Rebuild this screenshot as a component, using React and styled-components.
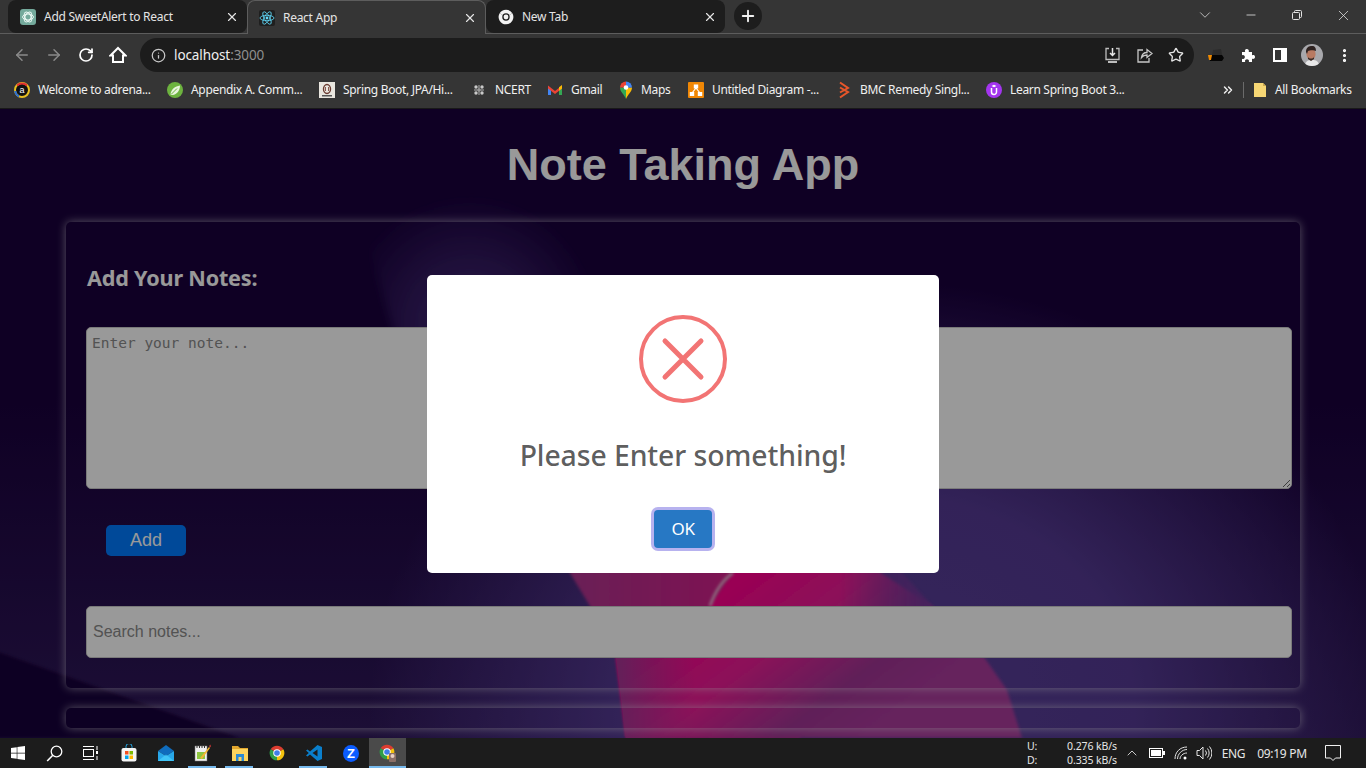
import styled, { createGlobalStyle } from 'styled-components'
import {
  ArrowLeft, ArrowRight, RotateCw, Info, Star, MoreVertical, ChevronDown, ChevronUp,
  Minus, X, Plus, ChevronsRight,
} from 'lucide-react'
import { FaWindows } from 'react-icons/fa'

const UI = `"Noto Sans", "Open Sans", sans-serif`

const GlobalStyle = createGlobalStyle`
  html, body { margin: 0; padding: 0; height: 100%; overflow: hidden; background: #1c1c1c; }
  #root { height: 100%; }
  * { box-sizing: border-box; }
`

const Screen = styled.div`
  width: 1366px;
  height: 768px;
  display: flex;
  flex-direction: column;
  overflow: hidden;
`

/* browser chrome */
const TabStrip = styled.div`
  height: 34px;
  flex: none;
  display: flex;
  background: #353535;
  border-bottom: 1px solid #5d5d5d;
  padding-left: 8px;
`
const Tab = styled.div`
  width: 239px;
  height: ${(p) => (p.$active ? '34px' : '33px')};
  display: flex;
  align-items: center;
  gap: 8px;
  padding: 0 8px 0 ${(p) => (p.$active ? 11 : 12)}px;
  background: ${(p) => (p.$active ? '#353535' : '#1d1d1d')};
  border-radius: 8px 8px ${(p) => (p.$active ? '0 0' : '8px 8px')};
  border: ${(p) => (p.$active ? '1px solid #5d5d5d' : 'none')};
  border-bottom: none;
  color: #e4e4e4;
  font: 12px ${UI};
  position: relative;
`
const TabTitle = styled.span`
  flex: 1;
  white-space: nowrap;
  letter-spacing: -0.28px;
`
const NewTab = styled.div`
  width: 28px;
  height: 28px;
  margin: 2px 0 0 9px;
  border-radius: 50%;
  background: #1d1d1d;
  color: #f1f1f1;
  display: flex;
  align-items: center;
  justify-content: center;
`
const WindowControls = styled.div`
  margin-left: auto;
  display: flex;
  align-items: center;
  height: 30px;
  color: #e2e2e2;
`
const WinButton = styled.div`
  width: ${(p) => p.$w || 46}px;
  display: flex;
  justify-content: center;
`
const RestoreIcon = () => (
  <svg width="12" height="12" viewBox="0 0 12 12" fill="none" stroke="#e2e2e2" strokeWidth="1">
    <rect x="1.5" y="3.5" width="7" height="7" rx="1" />
    <path d="M3.5 3.5V2.5a1 1 0 0 1 1-1h5a1 1 0 0 1 1 1v5a1 1 0 0 1-1 1h-1" />
  </svg>
)

const Toolbar = styled.div`
  height: 39px;
  flex: none;
  display: flex;
  align-items: center;
  background: #353535;
  padding: 4px 0 1px 6px;
`
const NavButton = styled.div`
  width: 32px;
  display: flex;
  justify-content: center;
  color: ${(p) => (p.$off ? '#8a8a8a' : '#ffffff')};
`
const Omnibox = styled.div`
  width: 1054px;
  height: 34px;
  margin-left: 6px;
  border-radius: 17px;
  background: #1c1c1c;
  display: flex;
  align-items: center;
  padding: 0 2px 0 11px;
  color: #c8c8c8;
`
const Url = styled.div`
  margin-left: 8px;
  font: 13.5px ${UI};
  letter-spacing: -0.1px;
  color: #f0f0f0;
  flex: 1;
  span { color: #8f8f8f; }
`
const BoxIcon = styled.div`
  width: 32px;
  display: flex;
  justify-content: center;
`
const ToolIcons = styled.div`
  display: flex;
  align-items: center;
  margin-left: 6px;
`
const ToolIcon = styled.div`
  width: 32px;
  display: flex;
  justify-content: center;
  color: #fff;
`

const BookmarkBar = styled.div`
  height: 36px;
  flex: none;
  display: flex;
  align-items: center;
  background: #353535;
  border-bottom: 1px solid #191919;
  padding: 0 14px 2px;
  gap: 16px;
  color: #f0f0f0;
  font: 12px ${UI};
`
const Bookmark = styled.div`
  display: flex;
  align-items: center;
  gap: 8px;
  white-space: nowrap;
`
const BookmarkLabel = styled.span`
  display: block;
  width: ${(p) => p.$w}px;
  letter-spacing: -0.32px;
`
const BookmarkEnd = styled.div`
  margin-left: auto;
  display: flex;
  align-items: center;
  margin-right: 1px;
`
const Separator = styled.div`
  width: 1px;
  height: 16px;
  background: #6b6b6b;
  margin: 0 9px 0 8px;
`

/* page */
const Page = styled.main`
  position: relative;
  flex: 1;
  min-height: 0;
  overflow: hidden;
  background: #19003c;
  font-family: "Liberation Sans", Arial, sans-serif;
`
const Wallpaper = styled.svg`
  position: absolute;
  inset: 0;
  width: 100%;
  height: 100%;
`
const Content = styled.div`
  position: relative;
  padding: 28px 66px 0;
`
const Title = styled.h1`
  margin: 0 0 30px;
  height: 55px;
  line-height: 55px;
  text-align: center;
  font-size: 45px;
  font-weight: 700;
  color: #fff;
`
const Card = styled.section`
  padding: ${(p) => p.$pad || '20px'};
  border-radius: 5px;
  box-shadow: 0 0 10px rgba(255, 255, 255, 0.55);
  margin-bottom: 20px;
`
const CardHeading = styled.h2`
  margin: 21px 0 34px 1px;
  height: 30px;
  font: 700 21.6px/30px ${UI};
  letter-spacing: -0.2px;
  color: #fff;
`
const NoteArea = styled.textarea`
  display: block;
  box-sizing: content-box;
  width: 100%;
  height: 148px;
  padding: 7px 5px 5px;
  border: 1px solid #ccc;
  border-radius: 5px;
  background: #fff;
  font: 14.5px "DejaVu Sans Mono", monospace;
  outline: none;
  &::placeholder { color: #8a8a8a; }
`
const AddButton = styled.button`
  display: block;
  width: 80px;
  height: 31px;
  margin: 36px 0 50px 20px;
  padding: 0;
  border: none;
  border-radius: 5px;
  background: #007bff;
  color: #fff;
  font: 18px "Liberation Sans", Arial, sans-serif;
`
const SearchInput = styled.input`
  display: block;
  box-sizing: content-box;
  width: 100%;
  height: 40px;
  padding: 5px 4px 5px 6px;
  border: 1px solid #ccc;
  border-radius: 5px;
  background: #fff;
  font: 16px "Liberation Sans", Arial, sans-serif;
  outline: none;
  &::placeholder { color: #8a8a8a; }
`

/* sweetalert */
const Backdrop = styled.div`
  position: absolute;
  inset: 0;
  background: rgba(0, 0, 0, 0.4);
  display: flex;
  align-items: center;
  justify-content: center;
`
const Modal = styled.div`
  width: 512px;
  height: 298px;
  background: #fff;
  border-radius: 5px;
  padding-top: 40px;
  display: flex;
  flex-direction: column;
  align-items: center;
`
const ModalTitle = styled.div`
  margin-top: 29px;
  height: 46px;
  font: 500 28.4px/46px ${UI};
  letter-spacing: -0.1px;
  color: rgba(0, 0, 0, 0.65);
`
const OkButton = styled.button`
  margin-top: 32px;
  width: 58px;
  height: 38px;
  padding: 0;
  border: none;
  border-radius: 4px;
  background: #2778c4;
  color: #fff;
  font: 17px ${UI};
  letter-spacing: -0.4px;
  box-shadow: 0 0 0 3px rgba(112, 102, 224, 0.5);
`

/* taskbar */
const Taskbar = styled.footer`
  height: 30px;
  flex: none;
  display: flex;
  align-items: stretch;
  background: #1c1c1c;
  color: #e6e6e6;
  font: 12px ${UI};
`
const TaskSlot = styled.div`
  width: ${(p) => p.$w || 37}px;
  flex: none;
  display: flex;
  align-items: center;
  justify-content: center;
  background: ${(p) => (p.$active ? '#4a4a4a' : 'transparent')};
  position: relative;
  &::after {
    content: '';
    display: ${(p) => (p.$running || p.$active ? 'block' : 'none')};
    position: absolute;
    left: ${(p) => (p.$active ? 0 : 4)}px;
    right: ${(p) => (p.$active ? 0 : 5)}px;
    bottom: 0;
    height: 2px;
    background: #76b9ed;
  }
`
const TaskGap = styled.div`
  width: 2px;
`
const Tray = styled.div`
  margin-left: auto;
  display: flex;
  align-items: center;
  height: 100%;
`
const NetSpeed = styled.div`
  width: 90px;
  margin: 1px 5px 0 0;
  display: grid;
  grid-template-columns: auto 1fr;
  font-size: 10.5px;
  line-height: 13.5px;
  letter-spacing: -0.1px;
  span:nth-child(even) { text-align: right; }
`
const TrayIcon = styled.div`
  width: ${(p) => p.$w || 24}px;
  display: flex;
  justify-content: center;
`
const TrayText = styled.div`
  width: ${(p) => p.$w}px;
  text-align: center;
  letter-spacing: -0.3px;
  white-space: nowrap;
`
const ShowDesktop = styled.div`
  width: 1px;
  margin-left: 10px;
  margin-right: 4px;
  background: #777;
`

/* drawn icons */
const ChromeLogo = ({ size = 16, mono }) => (
  <svg width={size} height={size} viewBox="0 0 24 24">
    <path d="M12 12L2.47 6.5A11 11 0 0 1 21.53 6.5Z" fill={mono ? '#f2f2f2' : '#dc3c30'} />
    <path d="M12 12L21.53 6.5A11 11 0 0 1 12 23Z" fill={mono ? '#f2f2f2' : '#f4c20d'} />
    <path d="M12 12L12 23A11 11 0 0 1 2.47 6.5Z" fill={mono ? '#f2f2f2' : '#2f9e48'} />
    <circle cx="12" cy="12" r="5.6" fill={mono ? '#1d1d1d' : '#fff'} />
    <circle cx="12" cy="12" r={mono ? 3.6 : 4.2} fill={mono ? '#f2f2f2' : '#3f7ee8'} />
  </svg>
)
const GptIcon = () => (
  <svg width="16" height="16" viewBox="0 0 16 16">
    <rect width="16" height="16" rx="3" fill="#74aa9c" />
    <g fill="none" stroke="#eefaf6" strokeWidth="1">
      <ellipse cx="8" cy="8" rx="5.4" ry="3" />
      <ellipse cx="8" cy="8" rx="5.4" ry="3" transform="rotate(60 8 8)" />
      <ellipse cx="8" cy="8" rx="5.4" ry="3" transform="rotate(120 8 8)" />
    </g>
  </svg>
)
const ReactIcon = () => (
  <svg width="16" height="16" viewBox="0 0 16 16">
    <rect width="16" height="16" rx="2" fill="#1f1f1f" />
    <g fill="none" stroke="#61dafb" strokeWidth="0.8">
      <ellipse cx="8" cy="8" rx="7" ry="2.7" />
      <ellipse cx="8" cy="8" rx="7" ry="2.7" transform="rotate(60 8 8)" />
      <ellipse cx="8" cy="8" rx="7" ry="2.7" transform="rotate(120 8 8)" />
    </g>
    <circle cx="8" cy="8" r="1.4" fill="#61dafb" />
  </svg>
)
const HomeIcon = () => (
  <svg width="18" height="18" viewBox="0 0 18 18" fill="none" stroke="#fff" strokeWidth="2" strokeLinejoin="miter">
    <path d="M1.5 9.5L9 2l7.5 7.5H14V16H4V9.5Z" />
  </svg>
)
const SaveIcon = () => (
  <svg width="17" height="17" viewBox="0 0 17 17" fill="none" stroke="#bdbdbd" strokeWidth="1.3">
    <path d="M5 1.5H2v11h13v-11h-3" />
    <path d="M8.5 1v7M6 6l2.5 2.5L11 6" stroke="#e8e8e8" strokeWidth="1.5" />
    <path d="M4 15h9" strokeWidth="2" />
  </svg>
)
const ShareIcon = () => (
  <svg width="17" height="17" viewBox="0 0 17 17" fill="none" stroke="#c8c8c8" strokeWidth="1.3">
    <path d="M7 3H2v12h11v-4" />
    <path d="M5.5 10.5C6 7 8.5 5.5 11 5.5V2.5L16 6.5l-5 4V8C9 8 7 8.6 5.5 10.5Z" />
  </svg>
)
const ExtensionLogo = () => (
  <svg width="18" height="16" viewBox="0 0 18 16">
    <path d="M3 8h12l2 3-2 3H3Z" fill="#050505" />
    <path d="M1 8h4l-1 5H2Z" fill="#f08a00" />
    <path d="M6 3l8-1 1 6H5Z" fill="#2b2b2b" />
  </svg>
)
const PuzzleIcon = () => (
  <svg width="16" height="16" viewBox="0 0 16 16" fill="#fff">
    <path d="M2 5h3.2a2 2 0 1 1 3.6-.4V5H12v3.2a2 2 0 1 1 .4 3.6H12V15H8.8a2 2 0 1 0-3.6 0H2v-3.2a2 2 0 1 0 0-3.6Z" />
  </svg>
)
const SidePanelIcon = () => (
  <svg width="14" height="14" viewBox="0 0 14 14">
    <path fillRule="evenodd" fill="#fff" d="M0 0h14v14H0ZM2 2v10h6V2Z" />
  </svg>
)
const Avatar = () => (
  <svg width="22" height="22" viewBox="0 0 22 22">
    <defs><clipPath id="avatar"><circle cx="11" cy="11" r="11" /></clipPath></defs>
    <g clipPath="url(#avatar)">
      <rect width="22" height="22" fill="#a8a8ac" />
      <path d="M4 22c0-5 3-6 7-6s7 1 7 6Z" fill="#e8e8e8" />
      <ellipse cx="10" cy="10" rx="4.6" ry="6" fill="#b87a62" />
      <path d="M5 8c0-5 3-6 6-6s4 2 4 5c-2-1-6-1-8 0l-1 3Z" fill="#2e2220" />
      <path d="M7 13c1 2 5 2 6 0v2l-3 2-3-2Z" fill="#3a2a25" />
    </g>
  </svg>
)
const AdrenalinIcon = () => (
  <svg width="16" height="16" viewBox="0 0 16 16">
    <circle cx="8" cy="8" r="7" fill="#111" stroke="#e8c020" strokeWidth="2" />
    <path d="M3 3.5A7 7 0 0 1 13 3.5" fill="none" stroke="#e03030" strokeWidth="2" />
    <path d="M1.2 9A7 7 0 0 0 5 14.4" fill="none" stroke="#2a6fd8" strokeWidth="2" />
    <text x="8" y="11" textAnchor="middle" fontSize="9" fill="#fff" fontFamily="Liberation Sans">a</text>
  </svg>
)
const SpringIcon = () => (
  <svg width="16" height="16" viewBox="0 0 16 16">
    <circle cx="8" cy="8" r="8" fill="#6db33f" />
    <path d="M3.5 12.5C4 7 8 4.5 13 3.5c0 5-3 9-7.500 9.500Z" fill="#e8f5dc" />
    <path d="M4.500 12L10 6.500" stroke="#6db33f" />
  </svg>
)
const BookCoverIcon = () => (
  <svg width="16" height="16" viewBox="0 0 16 16">
    <rect width="16" height="16" fill="#e9e6df" />
    <ellipse cx="8" cy="7" rx="3.500" ry="4.500" fill="none" stroke="#6a3b30" strokeWidth="1.400" />
    <path d="M6.500 5v4M9.500 5v4" stroke="#8a5a50" />
    <rect x="3" y="13" width="10" height="1.500" fill="#555" />
  </svg>
)
const NcertIcon = () => (
  <svg width="16" height="16" viewBox="0 0 16 16" fill="#c9c9c9">
    <circle cx="5" cy="5" r="1.700" /><circle cx="11" cy="5" r="1.700" />
    <circle cx="5" cy="11" r="1.700" /><circle cx="11" cy="11" r="1.700" />
    <circle cx="8" cy="8" r="1.700" fill="#8f8f8f" />
    <rect x="3" y="7.400" width="10" height="1.200" fill="#9a9a9a" />
    <rect x="7.400" y="3" width="1.200" height="10" fill="#9a9a9a" />
  </svg>
)
const GmailIcon = () => (
  <svg width="16" height="16" viewBox="0 0 16 16">
    <path d="M1 4v9h3V6.500Z" fill="#4285f4" />
    <path d="M15 4v9h-3V6.500Z" fill="#34a853" />
    <path d="M1 3.500L8 9l7-5.500v3L8 12 1 6.500Z" fill="#ea4335" />
    <path d="M12 5.200L15 3v3.500l-3 2.300Z" fill="#fbbc04" />
  </svg>
)
const MapsIcon = () => (
  <svg width="14" height="18" viewBox="0 0 14 18">
    <path d="M7 18C5 13 1 11 1 6.500L7 6.500Z" fill="#34a853" />
    <path d="M7 18c2-5 6-7 6-11.500L7 6.500Z" fill="#fbbc04" />
    <path d="M1 6.500A6 6 0 0 1 7 .5v6Z" fill="#ea4335" />
    <path d="M7 .5a6 6 0 0 1 6 6H7Z" fill="#4285f4" />
    <circle cx="7" cy="6.500" r="2.300" fill="#fff" />
  </svg>
)
const DrawioIcon = () => (
  <svg width="16" height="16" viewBox="0 0 16 16">
    <rect width="16" height="16" rx="1" fill="#f08705" />
    <path d="M8 6L4 11M8 6l4 5" stroke="#fff" strokeWidth="1.200" />
    <rect x="5.800" y="2.500" width="4.400" height="4" fill="#fff" />
    <rect x="1.800" y="10" width="4.400" height="4" fill="#fff" />
    <rect x="9.800" y="10" width="4.400" height="4" fill="#fff" />
  </svg>
)
const BmcIcon = () => (
  <svg width="16" height="18" viewBox="0 0 16 18" fill="none" stroke="#e8562a" strokeWidth="2">
    <path d="M4 1.500L12 7 4 11.500M4 6.500L12 11 4 16.500" />
  </svg>
)
const CourseIcon = () => (
  <svg width="16" height="16" viewBox="0 0 16 16">
    <circle cx="8" cy="8" r="8" fill="#a435f0" />
    <path d="M5.500 6v4a2.500 2.500 0 0 0 5 0V6" fill="none" stroke="#fff" strokeWidth="1.500" />
    <path d="M5.500 4L8 2.800 10.500 4 8 5.200Z" fill="#fff" />
  </svg>
)
const FolderBookmark = () => (
  <svg width="14" height="16" viewBox="0 0 14 16">
    <path d="M1 1h9l3 3v11H1Z" fill="#f6d674" />
    <path d="M10 1l3 3h-3Z" fill="#c9a850" />
  </svg>
)
const SearchGlass = () => (
  <svg width="17" height="17" viewBox="0 0 17 17" fill="none" stroke="#fff" strokeWidth="1.300">
    <circle cx="10.500" cy="6.500" r="5.300" />
    <path d="M6.800 10.300L1.200 16" strokeWidth="1.600" />
  </svg>
)
const StoreIcon = () => (
  <svg width="16" height="18" viewBox="0 0 16 18">
    <path d="M5 4V2.500a3 3 0 0 1 6 0V4" fill="none" stroke="#25a9e8" />
    <rect x="0.500" y="4" width="15" height="13.500" rx="2" fill="#f4f4f4" />
    <rect x="4" y="7" width="3.500" height="3.500" fill="#f25022" />
    <rect x="8.500" y="7" width="3.500" height="3.500" fill="#7fba00" />
    <rect x="4" y="11.500" width="3.500" height="3.500" fill="#00a4ef" />
    <rect x="8.500" y="11.500" width="3.500" height="3.500" fill="#ffb900" />
  </svg>
)
const MailIcon = () => (
  <svg width="16" height="16" viewBox="0 0 16 16">
    <path d="M0 6L8 0l8 6-8 5Z" fill="#0f6cbd" />
    <path d="M0 6v10h16V6L8 11Z" fill="#28a8ea" />
    <path d="M0 16L8 9.500 16 16Z" fill="#50d9ff" opacity="0.6" />
  </svg>
)
const NotepadIcon = () => (
  <svg width="17" height="18" viewBox="0 0 17 18">
    <rect x="1" y="2" width="12" height="15" fill="#f0f0f0" stroke="#777" strokeWidth="0.500" />
    <path d="M3 1v3M5.500 1v3M8 1v3M10.500 1v3" stroke="#333" />
    <rect x="3" y="8" width="8" height="7" fill="#8dc63f" />
    <path d="M6 14L15 3l1 1-8 11Z" fill="#f2b632" />
    <path d="M15 2l1.500-1.500 .5 2-1 1Z" fill="#b33" />
  </svg>
)
const ExplorerIcon = () => (
  <svg width="16" height="16" viewBox="0 0 16 16">
    <path d="M0 1h6l2 2h8v3H0Z" fill="#e2a72e" />
    <rect y="4" width="16" height="12" fill="#fcd45e" />
    <rect x="4" y="9" width="8" height="7" fill="#2a8ad4" />
    <rect x="6.500" y="12" width="3" height="4" fill="#fcd45e" />
  </svg>
)
const VsCodeIcon = () => (
  <svg width="16" height="16" viewBox="0 0 16 16">
    <path d="M11.500 0L16 2v12l-4.500 2L4 9.500 1.500 11.500 0 10.500 2.800 8 0 5.500l1.500-1L4 6.500Z" fill="#0a7fcc" />
    <path d="M11.500 4.500L6.500 8l5 3.500Z" fill="#1c1c1c" />
  </svg>
)
const ZoomChatIcon = () => (
  <svg width="16" height="17" viewBox="0 0 16 17">
    <ellipse cx="8" cy="8.500" rx="8" ry="8.500" fill="#0b5cff" />
    <text x="8" y="13" textAnchor="middle" fontSize="13" fontWeight="700" fill="#fff" fontFamily="Liberation Sans">Z</text>
  </svg>
)
const ChromeWithFace = () => (
  <svg width="18" height="18" viewBox="0 0 18 18">
    <foreignObject width="16" height="16"><ChromeLogo /></foreignObject>
    <rect x="10" y="9" width="7" height="9" rx="1" fill="#8a6f68" />
    <circle cx="13.500" cy="12" r="2" fill="#e8d0c4" />
  </svg>
)
const TaskViewIcon = () => (
  <svg width="16" height="16" viewBox="0 0 16 16" fill="none" stroke="#fff" strokeWidth="1">
    <rect x="1.500" y="4.500" width="10" height="7" />
    <path d="M1 1.500h11M1 14.500h11M15 1v4M15 11v4" />
    <rect x="14" y="6" width="2" height="3" fill="#fff" stroke="none" />
  </svg>
)
const BatteryIcon = () => (
  <svg width="16" height="10" viewBox="0 0 16 10">
    <rect x="0.500" y="0.500" width="13" height="9" fill="none" stroke="#fff" />
    <rect x="2" y="2" width="10" height="6" fill="#fff" />
    <rect x="14" y="3" width="2" height="4" fill="#fff" />
  </svg>
)
const WifiIcon = () => (
  <svg width="14" height="14" viewBox="0 0 14 14" fill="none" stroke="#e0e0e0">
    <path d="M1 13C1 6 6 1 13 1M3.500 13C3.500 8 8 3.500 13 3.500M6 13c0-3 3-6 7-6" />
    <circle cx="11" cy="12" r="1.500" fill="#fff" stroke="none" />
  </svg>
)
const VolumeIcon = () => (
  <svg width="16" height="16" viewBox="0 0 16 16" fill="none" stroke="#e6e6e6">
    <path d="M1 5.500h2.500L7 2v12l-3.500-3.500H1Z" />
    <path d="M9.500 5.500a4 4 0 0 1 0 5M11.500 3.500a7 7 0 0 1 0 9M13.500 1.500a10 10 0 0 1 0 13" />
  </svg>
)
const NotifyIcon = () => (
  <svg width="16" height="17" viewBox="0 0 16 17" fill="none" stroke="#f0f0f0">
    <path d="M.5 .5h15v12.500h-5L8 15.500 5.500 13h-5Z" />
  </svg>
)
const ErrorIcon = () => (
  <svg width="88" height="88" viewBox="0 0 88 88" fill="none" stroke="#f27474">
    <circle cx="44" cy="44" r="42" strokeWidth="4" />
    <path d="M26 26l36 36M62 26L26 62" strokeWidth="5" strokeLinecap="round" />
  </svg>
)

const bookmarks = [
  { icon: <AdrenalinIcon />, label: 'Welcome to adrena...', w: 113 },
  { icon: <SpringIcon />, label: 'Appendix A. Comm...', w: 112 },
  { icon: <BookCoverIcon />, label: 'Spring Boot, JPA/Hi...', w: 112 },
  { icon: <NcertIcon />, label: 'NCERT', w: 36 },
  { icon: <GmailIcon />, label: 'Gmail', w: 32 },
  { icon: <MapsIcon />, label: 'Maps', w: 31 },
  { icon: <DrawioIcon />, label: 'Untitled Diagram -...', w: 108 },
  { icon: <BmcIcon />, label: 'BMC Remedy Singl...', w: 110 },
  { icon: <CourseIcon />, label: 'Learn Spring Boot 3...', w: 114 },
]

const taskApps = [
  { icon: <StoreIcon /> },
  { icon: <MailIcon /> },
  { icon: <NotepadIcon />, running: true },
  { icon: <ExplorerIcon />, running: true },
  { icon: <ChromeLogo /> },
  { icon: <VsCodeIcon />, running: true },
  { icon: <ZoomChatIcon /> },
  { icon: <ChromeWithFace />, active: true },
]

const App = () => {
  return (
    <Screen>
      <GlobalStyle />
      <TabStrip>
        <Tab>
          <GptIcon />
          <TabTitle>Add SweetAlert to React</TabTitle>
          <X size={14} />
        </Tab>
        <Tab $active>
          <ReactIcon />
          <TabTitle>React App</TabTitle>
          <X size={14} />
        </Tab>
        <Tab>
          <ChromeLogo mono />
          <TabTitle>New Tab</TabTitle>
          <X size={14} />
        </Tab>
        <NewTab><Plus size={18} strokeWidth={2.5} /></NewTab>
        <WindowControls>
          <WinButton><ChevronDown size={18} strokeWidth={1} /></WinButton>
          <WinButton><Minus size={14} strokeWidth={1.4} /></WinButton>
          <WinButton><RestoreIcon /></WinButton>
          <WinButton><X size={17} strokeWidth={1.1} /></WinButton>
        </WindowControls>
      </TabStrip>

      <Toolbar>
        <NavButton $off><ArrowLeft size={18} /></NavButton>
        <NavButton $off><ArrowRight size={18} /></NavButton>
        <NavButton><RotateCw size={16} strokeWidth={2.6} /></NavButton>
        <NavButton><HomeIcon /></NavButton>
        <Omnibox>
          <Info size={15} />
          <Url>localhost<span>:3000</span></Url>
          <BoxIcon><SaveIcon /></BoxIcon>
          <BoxIcon><ShareIcon /></BoxIcon>
          <BoxIcon><Star size={16} strokeWidth={2} color="#e4e4e4" /></BoxIcon>
        </Omnibox>
        <ToolIcons>
          <ToolIcon><ExtensionLogo /></ToolIcon>
          <ToolIcon><PuzzleIcon /></ToolIcon>
          <ToolIcon><SidePanelIcon /></ToolIcon>
          <ToolIcon><Avatar /></ToolIcon>
          <ToolIcon><MoreVertical size={17} strokeWidth={2.5} /></ToolIcon>
        </ToolIcons>
      </Toolbar>

      <BookmarkBar>
        {bookmarks.map((b) => (
          <Bookmark key={b.label}>
            {b.icon}
            <BookmarkLabel $w={b.w}>{b.label}</BookmarkLabel>
          </Bookmark>
        ))}
        <BookmarkEnd>
          <ChevronsRight size={14} strokeWidth={2.5} />
          <Separator />
          <Bookmark>
            <FolderBookmark />
            <BookmarkLabel $w={76}>All Bookmarks</BookmarkLabel>
          </Bookmark>
        </BookmarkEnd>
      </BookmarkBar>

      <Page>
        <Wallpaper viewBox="0 0 1366 629" preserveAspectRatio="none">
          <defs>
            <radialGradient id="glowRight" gradientUnits="userSpaceOnUse" cx="0" cy="0" r="1" gradientTransform="translate(880 600) scale(510 430)">
              <stop offset="0" stopColor="#5a3f9a" />
              <stop offset="0.5" stopColor="#553a93" />
              <stop offset="1" stopColor="#553a93" stopOpacity="0" />
            </radialGradient>
            <radialGradient id="glowTop" gradientUnits="userSpaceOnUse" cx="470" cy="215" r="130">
              <stop offset="0" stopColor="#4a3080" />
              <stop offset="1" stopColor="#4a3080" stopOpacity="0" />
            </radialGradient>
            <linearGradient id="glowBottom" x1="0" y1="0" x2="0" y2="1">
              <stop offset="0.45" stopColor="#3a2468" stopOpacity="0" />
              <stop offset="1" stopColor="#3a2468" stopOpacity="0.7" />
            </linearGradient>
            <linearGradient id="pinkBlob" gradientUnits="userSpaceOnUse" x1="730" y1="480" x2="850" y2="640">
              <stop offset="0" stopColor="#ff008c" />
              <stop offset="0.36" stopColor="#e91e95" />
              <stop offset="0.73" stopColor="#a03593" />
              <stop offset="1" stopColor="#aa3a9c" />
            </linearGradient>
            <linearGradient id="pinkLeft" gradientUnits="userSpaceOnUse" x1="570" y1="470" x2="720" y2="470">
              <stop offset="0" stopColor="#b0358f" />
              <stop offset="1" stopColor="#d0208a" />
            </linearGradient>
            <linearGradient id="pinkFade" gradientUnits="userSpaceOnUse" x1="620" y1="0" x2="695" y2="0">
              <stop offset="0" stopColor="#a93595" />
              <stop offset="1" stopColor="#a93595" stopOpacity="0" />
            </linearGradient>
            <linearGradient id="pinkEdge" gradientUnits="userSpaceOnUse" x1="840" y1="0" x2="930" y2="0">
              <stop offset="0" stopColor="#75389a" stopOpacity="0" />
              <stop offset="1" stopColor="#75389a" />
            </linearGradient>
            <filter id="soft"><feGaussianBlur stdDeviation="1.5" /></filter>
            <filter id="softer"><feGaussianBlur stdDeviation="5" /></filter>
          </defs>
          <rect width="1366" height="629" fill="url(#glowBottom)" />
          <path d="M-10 540L240 629H-10Z" fill="#17003a" filter="url(#soft)" />
          <path d="M340 40L392 218 420 300 660 300 660 40Z" fill="url(#glowTop)" filter="url(#softer)" />
          <rect x="300" y="0" width="1100" height="629" fill="url(#glowRight)" />
          <path
            d="M570 464L590 497 616 548 626 629H800V400H540Z"
            fill="url(#pinkLeft)"
            filter="url(#soft)"
          />
          <path
            d="M710 497L733 464 770 420H860L881 464 932 497 984 548 1007 581 1022 629H626L616 548 640 548Z"
            fill="url(#pinkBlob)"
            filter="url(#soft)"
          />
          <path d="M616 548L626 629H700V548Z" fill="url(#pinkFade)" />
          <path d="M840 440H881L932 497 984 548H840Z" fill="url(#pinkEdge)" filter="url(#soft)" />
          <path d="M710 497C716 480 724 470 733 464" fill="none" stroke="#f0c4dc" strokeWidth="2.500" filter="url(#soft)" />
        </Wallpaper>
        <Content>
          <Title>Note Taking App</Title>
          <Card $pad="20px 20px 30px">
            <CardHeading>Add Your Notes:</CardHeading>
            <NoteArea placeholder="Enter your note..." />
            <AddButton>Add</AddButton>
            <SearchInput placeholder="Search notes..." />
          </Card>
          <Card $pad="10px" />
        </Content>
        <Backdrop>
          <Modal>
            <ErrorIcon />
            <ModalTitle>Please Enter something!</ModalTitle>
            <OkButton>OK</OkButton>
          </Modal>
        </Backdrop>
      </Page>

      <Taskbar>
        <TaskSlot $w={36}><FaWindows size={16} color="#fff" /></TaskSlot>
        <TaskSlot $w={36}><SearchGlass /></TaskSlot>
        <TaskSlot $w={36}><TaskViewIcon /></TaskSlot>
        <TaskGap />
        {taskApps.map((a, i) => (
          <TaskSlot key={i} $running={a.running} $active={a.active}>{a.icon}</TaskSlot>
        ))}
        <Tray>
          <NetSpeed>
            <span>U:</span><span>0.276 kB/s</span>
            <span>D:</span><span>0.335 kB/s</span>
          </NetSpeed>
          <TrayIcon $w={20}><ChevronUp size={16} strokeWidth={1.3} /></TrayIcon>
          <TrayIcon $w={30}><BatteryIcon /></TrayIcon>
          <TrayIcon $w={18}><WifiIcon /></TrayIcon>
          <TrayIcon $w={28}><VolumeIcon /></TrayIcon>
          <TrayText $w={31}>ENG</TrayText>
          <TrayText $w={66}>09:19 PM</TrayText>
          <TrayIcon $w={36}><NotifyIcon /></TrayIcon>
          <ShowDesktop />
        </Tray>
      </Taskbar>
    </Screen>
  )
}

export default App
